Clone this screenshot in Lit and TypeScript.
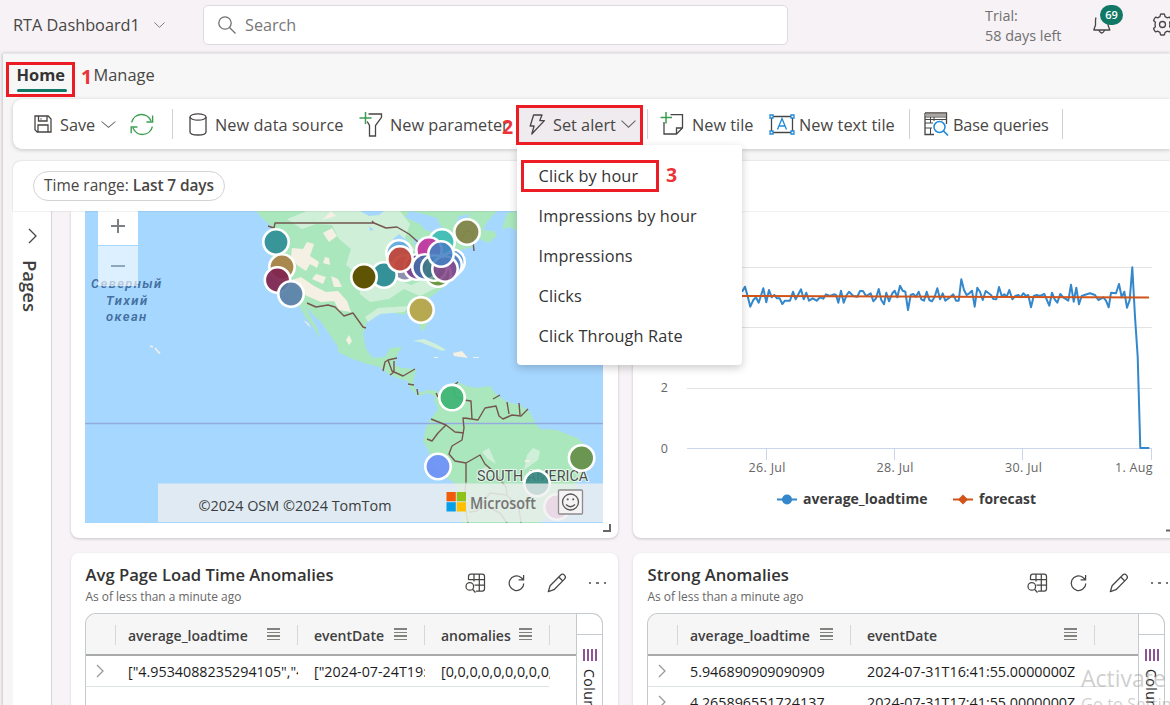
import { LitElement, html, svg, css } from "lit";
import { customElement, property } from "lit/decorators.js";

/* Load time samples: x in thirds of a pixel from the plot origin, y likewise. */
const EARLY: number[][] = [[336,155],[345,140],[352,165],[361,200],[370,180],[378,172],[386,188],[400,145],[409,187],[417,150],[425,172],[433,165],[441,175],[449,175],[457,192],[465,182],[480,182],[489,155],[497,178],[513,148],[521,178],[529,158],[537,182],[548,175],[560,182],[570,172],[580,176],[588,163],[600,168],[612,163],[618,165],[625,188],[633,152],[641,188],[650,165],[657,155],[670,168],[682,170],[690,153],[699,153],[708,168],[722,160],[730,184],[738,175],[746,147],[754,180],[762,193],[769,158],[777,184]];
const LATE: number[][] = [[7,160],[14,152],[22,172],[30,137],[38,152],[46,155],[54,210],[62,165],[70,162],[78,170],[86,155],[94,178],[102,182],[110,155],[118,180],[126,184],[134,170],[142,145],[150,178],[158,160],[166,182],[180,172],[190,163],[198,182],[206,182],[214,118],[222,150],[230,165],[238,160],[246,152],[254,200],[262,143],[270,155],[278,180],[287,153],[303,165],[310,177],[319,178],[327,141],[335,168],[343,163],[350,170],[358,150],[367,178],[376,168],[385,165],[392,172],[400,160],[408,168],[415,165],[423,202],[431,168],[440,165],[450,168],[463,162],[478,197],[486,158],[494,178],[502,188],[511,162],[520,172],[535,182],[543,134],[551,185],[559,143],[567,193],[575,168],[590,163],[600,160],[615,165],[625,180],[640,172],[648,182],[656,202],[663,158],[678,160],[687,132],[695,172],[703,155],[711,203],[719,180],[727,82],[735,230],[743,350],[751,624],[778,624]];
const LINE = [...EARLY, ...LATE.map(([x, y]) => [x + 780, y])]
  .map(([x, y]) => `${(630 + x / 3).toFixed(1)},${(240 + y / 3).toFixed(1)}`).join(" ");

type Pin = [number, number, string, number?];
const PINS: Pin[] = [
  [276,242,"#2f8f95",.92],[282,267,"#a98348",.95],[277.5,280,"#80244f",.93],[291,294,"#5a80a8",.93],
  [399,253,"#5ba4d8",.85],[452,262,"#4f8fce",.85],[449,265,"#4f7fc0",.85],[405,268,"#8b8bae",.95],[417,267,"#7b4591",.95],
  [384,275,"#2b8b93",.95],[364,277,"#5e5403",1],[438,274,"#6a953d",.95],[442,242,"#40beb6",.95],[429,250,"#c0379f",.95],
  [425,267,"#4769a5",.92],[434,268,"#3c7f7c",.7],[445,269,"#85478c",.88],[441,254,"#4380c2",.88],[400,259,"#c1483c",.95],
  [467,232,"#82864a",.96],[421,310,"#b6a54a",.95],[452,397.6,"#41b678",.97],[438,466.5,"#7094f6",.97],
  [581.6,458,"#68934e",.97],[537,483.5,"#358681",.9],[557,507,"#d77fc0",.9],
];

const ICON_CSS = css`
  svg { display: block; flex: none; fill: none; stroke: #484644; stroke-width: 1.3; overflow: visible; }
  .green { stroke: #3a9e50; }
  .blue { stroke: #2089d8; }
`;

const chevron = (w = 14, h = 7) => html`<svg width=${w} height=${h} viewBox="0 0 14 7" preserveAspectRatio="none"><path d="M.5.5 7 6.3 13.5.5" stroke-width="1" stroke="#666"/></svg>`;

const ICONS = {
  save: html`<svg width="18" height="18"><path d="M1 1h13.2L17 4v13H3.2L1 14.8zM4.5 1v5h8.5V1M4 17v-7h10v7"/><path d="M7 3.2v1.5" stroke-width="1"/></svg>`,
  refresh: html`<svg class="green" width="24" height="23"><path class="green" stroke-width="1.4" d="M1.6 9.3A10.2 10.2 0 0 1 21 8M22.6 2.6V9h-6.2M22.4 13.6A10.2 10.2 0 0 1 3 15M1.2 20.3V14h6.2"/></svg>`,
  db: html`<svg width="18" height="23"><path d="M1 4v15c0 1.8 3.2 3 8 3s8-1.200 8-3V4"/><ellipse cx="9" cy="4" rx="8" ry="3.2"/></svg>`,
  filter: html`<svg width="24" height="25"><path class="green" stroke-width="1.5" d="M5.500 0v12M-.5 6h12"/><path d="M8.500 2h13v3.300L15.500 13.500V24H9.500v-10.500L7.200 9.500"/></svg>`,
  bolt: html`<svg width="16" height="21"><path d="M4.600 1h8.400L10.800 6.600h4.600L2.800 20l2.300-8H1.200z" stroke-linejoin="round"/></svg>`,
  tile: html`<svg width="23" height="24"><path class="green" stroke-width="1.5" d="M5 0v11.500M-.5 5.500h11.500"/><path d="M9.500 2.600h12V16l-6 6H3V10M15.500 22v-6h6"/></svg>`,
  text: html`<svg width="26" height="21"><path d="M3 2.500h20M3 18.500h20M2.500 3v15M23.500 3v15"/><g class="blue" fill="#fff"><path d="M1 1h3v3H1zM22 1h3v3h-3zM1 17h3v3H1zM22 17h3v3h-3z"/><path fill="none" d="M8.500 15.500 13 4.500l4.500 11M10 12h6"/></g></svg>`,
  query: html`<svg width="25" height="24"><path d="M1 1h21.500v11M1 1v21.500h9" /><path d="M1.500 3h20.500" stroke-width="2.500" stroke="#aaa6a3"/><path d="M1 5h21M1 11h8M1 16h7M6.500 5v6M18 7.500v1M6.500 16v6M10 5v4M1 7.500h21" stroke-width="1"/><circle class="blue" cx="15.500" cy="15" r="5.500" stroke-width="1.500"/><path class="blue" stroke-width="1.700" d="m19.500 19 4.500 4.500"/></svg>`,
  explore: html`<svg width="21" height="20"><path d="M3.500 7V3.500a2.300 2.300 0 0 1 2.300-2.300h11.400a2.300 2.300 0 0 1 2.300 2.300v12.200a2.300 2.300 0 0 1-2.300 2.300H11M3.500 6.500h16M9.500 12.200h10M9 1v7.500M14.300 1v17" stroke-width="1.250"/><circle cx="4.800" cy="13.400" r="3.800" stroke-width="1.250"/><path stroke-width="1.300" d="m7.500 16.200 3 3.300"/></svg>`,
  reload: html`<svg width="17" height="18"><path d="M15.800 9.500A7.300 7.300 0 1 1 13 3.500l2.400 2M15.600 1v4.800h-5" stroke-width="1.250"/></svg>`,
  pencil: html`<svg width="20" height="20"><path stroke-linejoin="round" stroke-width="1.250" d="M13.500 2.200a2.700 2.700 0 0 1 4 3.900L7 16.700 1.300 18.700l1.800-5.900zM11.800 4l4 4"/></svg>`,
  gear: html`<svg width="23" height="23"><path stroke-linejoin="round" d="M8.950 3.650 9.530 1.190a10.500 10.500 0 0 1 3.940 0L14.050 3.650a8.250 8.250 0 0 1 2 1.150L18.470 4.080a10.500 10.500 0 0 1 1.970 3.410L18.600 9.230a8.250 8.250 0 0 1 0 4.540L20.440 15.500a10.500 10.500 0 0 1-1.970 3.410L16.050 18.200a8.250 8.250 0 0 1-2 1.150L13.470 21.810a10.500 10.500 0 0 1-3.940 0L8.950 19.350a8.250 8.250 0 0 1-2-1.150L4.530 18.920a10.500 10.500 0 0 1-1.970-3.410L4.400 13.770a8.250 8.250 0 0 1 0-4.540L2.560 7.500a10.500 10.500 0 0 1 1.970-3.410L6.950 4.800a8.250 8.250 0 0 1 2-1.150z"/><circle cx="11.500" cy="11.500" r="3"/></svg>`,
};

@customElement("world-map")
class WorldMap extends LitElement {
  static styles = css`
    :host { display: block; height: 312px; }
    svg { display: block; }
    text { font-family: "Open Sans", "Noto Sans", sans-serif; }
    .sea { font-style: italic; font-weight: 600; font-size: 13px; fill: #44709f; font-family: Roboto, sans-serif; letter-spacing: .8px; }
    .land { fill: #abe7bd; }
    .pale { fill: #cfefd8; }
    .sand { fill: #f5f0e4; }
    .water { fill: #a6d7ff; }
    .border { fill: none; stroke: #74564f; stroke-width: 1.4; stroke-linejoin: round; }
    .pin { stroke: #fff; stroke-width: 2.6; }
    .copy { font-size: 15px; fill: #3c3c3c; }
    .ms { font-size: 17px; font-weight: 600; fill: #757575; }
    .continent { font-size: 14px; fill: #45504a; stroke: #e9f5ec; stroke-width: 2; paint-order: stroke; font-family: Roboto, sans-serif; }
    .face { fill: none; stroke: #555; stroke-width: 1.3; }
  `;
  render() {
    return html`<svg width="518" height="312" viewBox="85 211 518 312">
      <rect class="water" x="85" y="211" width="518" height="312"/>
      <path class="land" d="M256 211 262 218 270 225 274 229 271 240 271 256 275 276 283 295 299 305 305 317 311 324 318 335 321 339 317 328 309 314 306 306 313 315 321 322 328 332 338 347 338 352 350 358 367 364 380 367 388 374 400 379 408 381 410 388 418 396 428 393 436 397 438 391 428 390 417 393 413 383 416 369 402 368 394 365 397 355 402 347 390 348 385 357 373 358 366 349 363 334 367 322 380 313 392 312 402 315 410 312 417 321 423 332 427 325 425 312 422 302 432 296 443 288 455 277 452 262 460 250 473 247 470 240 480 239 488 243 497 236 494 231 483 230 487 222 497 211z"/>
      <path class="land" d="M507 213 502 229 510 227 517 231 517 211z"/>
      <path class="land" d="M437 394 447 386 457 382 467 386 477 388 490 386 496 394 507 402 520 405 530 412 535 422 540 429 557 430 577 438 587 446 591 456 587 468 577 482 575 494 566 505 550 513 540 523 462 523 461 500 457 485 443 475 434 465 428 450 423 441 427 425 432 417 438 409 434 400z"/>
      <path class="pale" d="M305 211H400L410 224 405 238 415 250 395 265 396 279 411 285 432 276 436 288 420 296 404 289 389 299 370 302 360 294 358 275 346 265 351 249 339 239 332 225 317 224z"/>
      <path class="pale" d="M365 317 378 308 410 306 404 312 380 314 368 322zM307 211 316 224 302 229 287 219zM488 459 482 452 489 448 496 464zM527 455 533 448 540 451 538 460 524 470zM478 470 487 467 493 475 483 478zM412 341 424 339 436 344 446 350 442 351 430 346 420 342z"/>
      <path class="sand" d="M292 248 303 249 307 242 314 244 310 256 319 262 317 268 310 264 306 271 297 265 291 256zM289 281 301 277 314 286 326 292 338 291 347 301 351 312 339 310 334 301 321 302 307 296zM323 233 332 228 337 236 329 242zM331 211 336 216 322 220zM325 257 329 258 330 265 323 263zM316 274 326 277 323 284 312 279zM331 276 338 279 342 287 334 287zM303 320 308 323 311 328 306 323zM349 335 352 341 349 345 346 340zM453 353 462 351 468 358 454 356zM434 357h4v1h-4zM473 357h6v1h-6zM525 460h5v2h-5z"/>
      <path class="water" d="M410 211 424 214 437 218 441 227 449 230 444 235 425 230 420 224 405 217zM369 226 374 230 370 231zM459 216 470 214 466 220 455 225zM360 211H384L379 215 369 216zM399 234 409 242 398 247 393 239zM413 238 427 241 422 247 416 248z"/>
      <path class="border" d="M85 423.500H603" style="stroke:#94abe0;stroke-width:1.500"/>
      <path class="border" d="M268 226 274 228 275 223H374L386 228 397 227 409 234 418 242M374 223 372 221M460 240 467 231 472 232 474 251M307 303 316 307 328 305 335 307 344 316 353 313 363 327 366 328M383 371 385 362 388 360 397 358M388 360 392 371 403 376 415 369M394 361 394 372 390 375M408 384 414 385M417 389 418 395M436 393 438 397"/>
      <path class="border" d="M453 386 458 382M453 386 455 396 464 400 471 401 472 419 463 418 464 428 462 440 452 446 449 454 455 461 466 463 480 455 485 464 494 472M431 419 446 425 438 433 432 441 427 439M446 425 455 432 464 433M465 418 478 420 485 408 496 406 499 416 503 419 512 415 521 416 528 409M493 399 500 395M507 402 509 414M519 403 520 415M466 463 466 482"/>
      <path class="border" opacity=".55" d="M466 482 464 500 468 523M494 472 506 487 507 495 490 493M490 493 481 505 477 511 469 512M490 508 500 513 507 523M507 495 519 509 521 523"/>
      <path d="M150 346l3 1M155 348l4 5 1-1" stroke="#f5f0e4" stroke-width="1.500" fill="none"/>
      <text class="sea" x="91" y="288" textLength="71">Северный</text>
      <text class="sea" x="106" y="305" textLength="42">Тихий</text>
      <text class="sea" x="106" y="321" textLength="41">океан</text>
      <text class="continent" x="477" y="481" textLength="111" lengthAdjust="spacingAndGlyphs">SOUTH AMERICA</text>
      ${PINS.map(([x, y, color, o]) => svg`<circle class="pin" cx=${x} cy=${y} r="12.700" fill=${color} fill-opacity=${o ?? 1}/>`)}
      <rect x="158" y="483.500" width="445" height="38.500" fill="#f0f0f0" fill-opacity=".78"/>
      <text class="copy" x="198.500" y="510.500" textLength="193" lengthAdjust="spacingAndGlyphs">©2024 OSM ©2024 TomTom</text>
      <path fill="#f25a0c" d="M446.500 492h9.300v9.300h-9.300z"/><path fill="#8cc21a" d="M456.700 492h9.300v9.300h-9.300z"/>
      <path fill="#069fe8" d="M446.500 502.200h9.300v9.300h-9.300z"/><path fill="#ffc003" d="M456.700 502.200h9.300v9.300h-9.300z"/>
      <text class="ms" x="470" y="508.500" textLength="66" lengthAdjust="spacingAndGlyphs">Microsoft</text>
      <rect x="558.500" y="490" width="24" height="24" rx="1" fill="#f5f3f4" stroke="#8d8b8b" stroke-width="1.300"/>
      <circle class="face" cx="570.500" cy="502" r="8"/><path class="face" d="M566 504.500q4.500 4.500 9 0"/>
      <path d="M566.800 498.500h1.800v1.800h-1.800zM572.300 498.500h1.800v1.800h-1.800z" fill="#555"/>
      <rect x="98" y="205" width="40" height="40" fill="#fff"/><rect x="98" y="246" width="40" height="40" fill="#fff" fill-opacity=".62"/>
      <path d="M111 226h14M118 219v14" stroke="#7c8084" stroke-width="2"/><path d="M111 266h14" stroke="#8fa6bf" stroke-width="2"/>
    </svg>`;
  }
}

@customElement("load-chart")
class LoadChart extends LitElement {
  static styles = css`
    :host { display: block; }
    svg { display: block; }
    text { font: 12.500px "Open Sans", sans-serif; fill: #666; }
    .legend { font-weight: 700; font-size: 14px; fill: #3c3c3c; }
    .end { text-anchor: end; }
    .grid { stroke: #e3e3e3; stroke-width: 1; }
    .axis { stroke: #ccd6eb; stroke-width: 1; }
    .line { fill: none; stroke: #3387ca; stroke-width: 2; stroke-linejoin: round; }
    .fc { stroke: #d1541a; stroke-width: 2; }
  `;
  render() {
    return html`<svg width="537" height="327" viewBox="633 211 537 327">
      <path class="grid" d="M687 267.500h465M687 327.500h465M687 388.500h465"/>
      <path class="axis" d="M687 448.500h465M766.500 448v12M894.500 448v12M1022.500 448v12M1151.500 448v12"/>
      <polyline class="line" points=${LINE}/>
      <path class="fc" d="M741 296 1149 297.500"/>
      <text class="end" x="668" y="392">2</text><text class="end" x="668" y="453">0</text>
      <text x="748.500" y="472" textLength="37">26. Jul</text><text x="876.500" y="472" textLength="37">28. Jul</text>
      <text x="1005" y="472" textLength="37">30. Jul</text><text x="1115" y="472" textLength="37.500">1. Aug</text>
      <path class="line" d="M777 499.500h20"/><circle cx="787" cy="499.500" r="5" fill="#3387ca"/>
      <text class="legend" x="803" y="504" textLength="124.500" lengthAdjust="spacingAndGlyphs">average_loadtime</text>
      <path class="fc" d="M953 499.500h20"/><path d="m963 494.500 5 5-5 5-5-5z" fill="#d1541a"/>
      <text class="legend" x="979" y="504" textLength="57" lengthAdjust="spacingAndGlyphs">forecast</text>
      <path d="M1166 530.500h4" stroke="#666" stroke-width="2"/>
    </svg>`;
  }
}

interface Col { name: string; width: number; values: string[]; }

@customElement("data-tile")
class DataTile extends LitElement {
  @property() heading = "";
  @property({ attribute: false }) cols: Col[] = [];
  @property({ type: Number }) lead = 30;
  static styles = [ICON_CSS, css`
    :host { display: block; box-sizing: border-box; height: 180px; padding: 10px 14px 0; background: #fff; border-radius: 8px; box-shadow: 0 1px 3px #0002; }
    .head { display: flex; justify-content: space-between; height: 50px; padding-left: .5px; }
    .title { font-weight: 600; font-size: 16.650px; line-height: 24px; color: #333; }
    .sub { font-size: 11.920px; line-height: 18px; color: #666; }
    .tools { display: flex; align-items: center; gap: 22px; margin: -11px -2px 0 0; }
    .dots { display: flex; gap: 5px; }
    .dots i { width: 2.500px; height: 2px; background: #777; }
    .table { display: flex; height: 130px; width: 518px; box-sizing: border-box; border: 1.500px solid #c4cacd; border-bottom: 0; border-radius: 11px 11px 0 0; overflow: hidden; }
    .main { flex: 1; min-width: 0; }
    .row { display: flex; height: 30px; border-bottom: 1px solid #dde2e5; color: #1c1c1c; font-size: 14.300px; }
    .row.clip { width: 463px; }
    .th { height: 40px; width: auto; background: #f6f6f6; border-bottom: 2px solid #a9aba8; color: #404040; font-weight: 600; font-size: 14px; }
    .lead { flex: none; box-sizing: border-box; display: flex; align-items: center; padding-left: 10px; }
    .cell { flex: none; box-sizing: border-box; padding-left: 12px; display: flex; align-items: center; overflow: hidden; white-space: nowrap; }
    .cell + .cell { padding-left: 16px; }
    .cell > span { overflow: hidden; }
    .th .cell > span { padding-top: 2px; }
    .th .cell, .th .lead { position: relative; justify-content: space-between; padding-right: 18px; }
    .th .cell::after, .th .lead::after { content: ""; position: absolute; right: 0; top: 11px; height: 20px; width: 1px; background: #d5d7d8; }
    .burger { display: grid; gap: 2px; }
    .burger i { width: 13px; height: 1.500px; background: #81837f; }
    .side { width: 26px; border-left: 1.500px solid #c4cacd; display: flex; flex-direction: column; align-items: center; box-sizing: border-box; }
    .side::before { content: ""; height: 20px; width: 100%; border-bottom: 1.500px solid #c4cacd; }
    .bars { display: flex; gap: 2px; margin: 14px 0 8px; }
    .bars i { width: 2px; height: 12px; background: #8d5594; }
    .vert { writing-mode: vertical-rl; font-size: 14px; letter-spacing: .5px; color: #222; }
    .row svg { stroke: #999; }
  `];
  render() {
    const rows = this.cols[0]?.values.map((_, i) => i) ?? [];
    return html`
      <div class="head">
        <div><div class="title">${this.heading}</div><div class="sub">As of less than a minute ago</div></div>
        <div class="tools">${ICONS.explore}${ICONS.reload}${ICONS.pencil}<div class="dots"><i></i><i></i><i></i></div></div>
      </div>
      <div class="table">
        <div class="main">
          <div class="row th"><div class="lead" style="width:${this.lead}px"></div>
            ${this.cols.map(c => html`<div class="cell" style="width:${c.width}px"><span>${c.name}</span><div class="burger"><i></i><i></i><i></i><i></i></div></div>`)}
          </div>
          ${rows.map(i => html`<div class="row clip"><div class="lead" style="width:${this.lead}px"><svg width="8" height="14"><path d="m1 1 6 6-6 6"/></svg></div>
            ${this.cols.map(c => html`<div class="cell" style="width:${c.width}px"><span>${c.values[i]}</span></div>`)}</div>`)}
        </div>
        <div class="side"><div class="bars"><i></i><i></i><i></i><i></i></div><div class="vert">Columns</div></div>
      </div>`;
  }
}

@customElement("app-root")
class AppRoot extends LitElement {
  static styles = [ICON_CSS, css`
    :host { display: block; position: relative; width: 1170px; height: 705px; overflow: hidden; box-sizing: border-box; background: #f7f3f6; font-family: "Open Sans", "Noto Sans", sans-serif; font-size: 16.300px; color: #484644; white-space: nowrap; }
    .top { display: flex; height: 53px; background: #f6f2f6; }
    .top > * { flex: none; }
    .name { display: flex; align-items: center; gap: 14px; box-sizing: border-box; width: 203px; height: 50px; padding-left: 13px; }
    .search { display: flex; align-items: center; gap: 9px; box-sizing: border-box; width: 585px; height: 40px; margin-top: 5px; padding-left: 14px; background: #fff; border: 1.500px solid #dddbdd; border-radius: 5px; color: #777; font-size: 16.200px; }
    .trial { margin: 6px 0 0 197px; width: 108px; line-height: 19.500px; font-size: 14.400px; color: #707070; }
    .bell { position: relative; padding-top: 13px; width: 58px; }
    .count { position: absolute; left: 7px; top: 5px; width: 23px; height: 20px; border-radius: 10px; background: #117865; color: #fff; font-size: 11px; font-weight: 600; text-align: center; line-height: 20px; }
    .gear { padding-top: 13px; }
    .shell { margin-left: 3px; border-top: 1px solid #e9e5e9; box-shadow: -1px 0 3px #0003; background: #f7f6f7; height: 652px; }
    .tabs { display: flex; height: 45px; padding-left: 13.500px; background: #f7f7f7; line-height: 42px; }
    .tab { width: 77px; font-size: 16.400px; }
    .tab.on { font-weight: 700; color: #333; display: grid; grid-template-rows: 35px 3px; }
    .tab.on::after { content: ""; background: #117865; border-radius: 2px; width: 50px; }
    .bar { position: relative; display: grid; grid-template-columns: 96px 42px 17px 171px 156px 131px 14px 108px 140px 15px 138px 2px; align-items: center; margin-left: 10px; height: 50px; padding-left: 21px; background: #fff; border-radius: 9px 0 0 9px; box-shadow: 0 1px 4px #0003; z-index: 3; }
    .item { display: flex; align-items: center; }
    .item > span { padding-top: 1px; }
    .down { margin-left: -3px; }
    .far { margin-left: -2px; }
    .src { letter-spacing: .07px; }
    .tight { letter-spacing: -.15px; }
    .sep { width: 1px; height: 30px; background: #d2d0d2; }
    .alert { width: 127px; height: 39px; background: #efebef; position: relative; box-sizing: border-box; padding-left: 13px; }
    .menu { position: absolute; left: 1px; top: 40px; width: 225px; height: 220px; box-sizing: border-box; padding: 11px 0 0 21.500px; background: #fff; border-radius: 0 4px 4px 4px; box-shadow: 0 3px 9px #0003; color: #333; line-height: 40px; letter-spacing: .15px; }
    .filters { display: flex; align-items: center; margin: 12px 0 0 10px; height: 50px; padding-left: 20px; background: #fff; border-radius: 8px 0 0 0; box-shadow: 0 0 2px #0003; position: relative; z-index: 2; }
    .pill { box-sizing: border-box; height: 30px; width: 192px; padding-left: 10px; border: 1.500px solid #d4d2d4; border-radius: 15px; line-height: 26px; font-size: 15.450px; }
    .pill b { font-weight: 600; letter-spacing: -.1px; }
    .body { display: flex; margin-left: 10px; height: 495px; background: #f7f3f6; }
    .pages { box-sizing: border-box; width: 39px; border-right: 1.500px solid #d8d5d8; background: #fff; padding: 17px 0 0 15px; flex: none; }
    .pages span { display: block; writing-mode: vertical-rl; font-weight: 600; font-size: 18.500px; line-height: 22px; margin: 16px 0 0 -9px; color: #404040; }
    .canvas { display: grid; grid-template-columns: 547px 547px; grid-template-rows: 327px 180px; gap: 15px; padding-left: 19px; }
    .tile { position: relative; background: #fff; border-radius: 0 0 8px 8px; box-shadow: 0 1px 3px #0003; }
    .map { padding-left: 14px; }
    .grip { position: absolute; right: 7px; bottom: 6px; width: 6px; height: 6px; border: solid #666; border-width: 0 2px 2px 0; }
    .mark { position: absolute; box-sizing: border-box; border: 3px solid #ec1c24; z-index: 5; }
    .num { position: absolute; z-index: 5; color: #ee3338; font-weight: 700; font-size: 19.500px; line-height: 20px; }
    .m1 { left: 6px; top: 62px; width: 69px; height: 35px; } .n1 { left: 81px; top: 67px; }
    .m2 { left: 516px; top: 105px; width: 127px; height: 40px; } .n2 { left: 502px; top: 117px; }
    .m3 { left: 521px; top: 160px; width: 138px; height: 32px; } .n3 { left: 666px; top: 165px; }
    .water { position: absolute; left: 1081px; top: 664px; z-index: 6; color: #9997; font-size: 23px; line-height: 28px; }
    .water small { display: block; font-size: 16.500px; line-height: 24px; }
    .g7 { gap: 8px; } .g6 { gap: 6px; } .g5 { gap: 4px; }
  `];
  render() {
    return html`
      <div class="top">
        <div class="name">RTA Dashboard1 ${chevron(11, 6)}</div>
        <div class="search"><svg width="18" height="18"><circle cx="7" cy="7" r="6.200" style="stroke:#707070"/><path d="m11.500 11.500 6 6" style="stroke:#707070"/></svg>Search</div>
        <div class="trial">Trial:<br>58 days left</div>
        <div class="bell"><svg width="17" height="23"><path stroke-linejoin="round" d="M3 4.500Q2.500 6 2.500 8v4L.8 17h16L15 12V9M6 17.500q2.700 5 5.500 0"/></svg><div class="count">69</div></div>
        <div class="gear">${ICONS.gear}</div>
      </div>
      <div class="shell">
        <div class="tabs"><div class="tab on">Home</div><div class="tab">Manage</div></div>
        <div class="bar">
          <div class="item g7">${ICONS.save}<span>Save</span><div class="far">${chevron(15, 7)}</div></div>
          <div class="item">${ICONS.refresh}</div>
          <div class="sep"></div>
          <div class="item g7">${ICONS.db}<span class="src">New data source</span></div>
          <div class="item g6">${ICONS.filter}<span>New parameter</span></div>
          <div class="item g7 alert">${ICONS.bolt}<span>Set alert</span><div class="down">${chevron(15, 8)}</div>
            <div class="menu"><div>Click by hour</div><div>Impressions by hour</div><div>Impressions</div><div>Clicks</div><div>Click Through Rate</div></div>
          </div>
          <div class="sep"></div>
          <div class="item g7">${ICONS.tile}<span>New tile</span></div>
          <div class="item g5">${ICONS.text}<span class="src">New text tile</span></div>
          <div class="sep"></div>
          <div class="item g5">${ICONS.query}<span class="tight">Base queries</span></div>
          <div class="sep"></div>
        </div>
        <div class="filters"><div class="pill">Time range: <b>Last 7 days</b></div></div>
        <div class="body">
          <div class="pages"><svg width="9" height="16"><path d="m1 1 7 7-7 7"/></svg><span>Pages</span></div>
          <div class="canvas">
            <div class="tile map"><world-map></world-map><div class="grip"></div></div>
            <div class="tile"><load-chart></load-chart></div>
            <data-tile heading="Avg Page Load Time Anomalies" lead="30" .cols=${[
              { name: "average_loadtime", width: 182, values: ['["4.9534088235294105","4.95'] },
              { name: "eventDate", width: 127, values: ['["2024-07-24T19:41'] },
              { name: "anomalies", width: 125, values: ["[0,0,0,0,0,0,0,0,0,0,0"] },
            ]}></data-tile>
            <data-tile heading="Strong Anomalies" lead="30" .cols=${[
              { name: "average_loadtime", width: 173, values: ["5.946890909090909", "4.265896551724137"] },
              { name: "eventDate", width: 244, values: ["2024-07-31T16:41:55.0000000Z", "2024-07-31T17:41:55.0000000Z"] },
            ]}></data-tile>
          </div>
        </div>
      </div>
      <div class="mark m1"></div><div class="num n1">1</div>
      <div class="mark m2"></div><div class="num n2">2</div>
      <div class="mark m3"></div><div class="num n3">3</div>
      <div class="water">Activate Windows<small>Go to Settings to activate</small></div>
    `;
  }
}
